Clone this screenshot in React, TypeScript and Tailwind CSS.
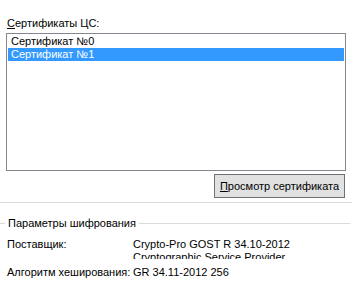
import React from 'react';

export default function App() {
  return (
    <div className="w-[352px] h-[287px] overflow-hidden bg-white text-[11px] leading-[13px] text-black font-['Liberation_Sans',Arial,sans-serif]">
      {/* Certificates list */}
      <div className="px-[6px] pt-[17px]">
        <div className="pl-[1px] h-[16px]">
          <span className="underline">С</span>ертификаты ЦС:
        </div>
        <div className="h-[138px] border border-[#828790] bg-white p-[1px] w-[340px]">
          <div className="h-[13px] pl-[3px]">Сертификат №0</div>
          <div className="h-[13px] pl-[3px] bg-[#3399ff] text-white">Сертификат №1</div>
        </div>
        <div className="flex justify-end pr-[1px] pt-[3px]">
          <button className="w-[131px] h-[24px] border border-[#707070] bg-[#e1e1e1] text-[11px]">
            <span className="underline">П</span>росмотр сертификата
          </button>
        </div>
      </div>

      <div className="mt-[4px] h-px bg-[#dadada]" />

      {/* Encryption params */}
      <div className="pt-[13px]">
        <div className="flex items-center h-[14px]">
          <div className="w-[5px] h-px bg-[#dadada]" />
          <span className="px-[3px]">Параметры шифрования</span>
          <div className="flex-1 h-px bg-[#dadada] mr-[2px]" />
        </div>
        <div className="px-[7px] pt-[8px]">
          <div className="flex h-[21px] overflow-hidden">
            <div className="w-[126px] shrink-0">Поставщик:</div>
            <div>
              <div>Crypto-Pro GOST R 34.10-2012</div>
              <div>Cryptographic Service Provider</div>
            </div>
          </div>
          <div className="flex pt-[7px] whitespace-nowrap">
            <div className="w-[126px] shrink-0">Алгоритм хеширования:</div>
            <div>GR 34.11-2012 256</div>
          </div>
        </div>
      </div>
    </div>
  );
}
